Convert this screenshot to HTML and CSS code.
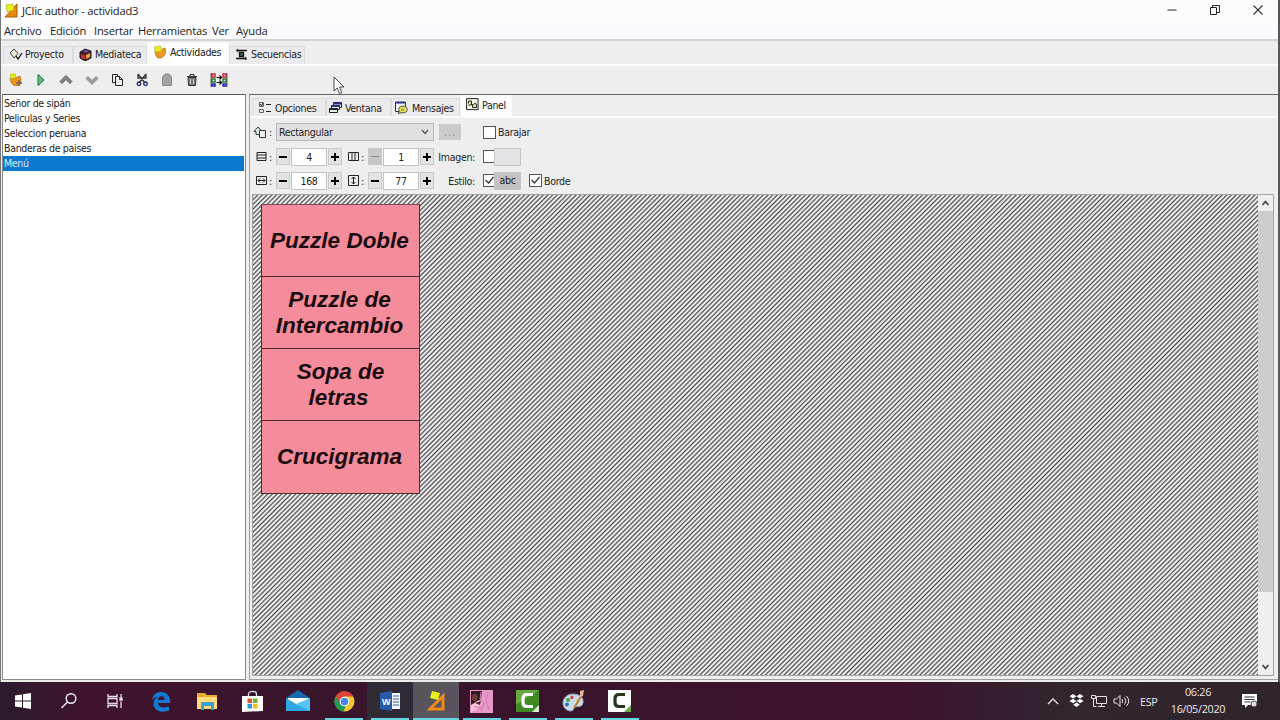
FILE: index.html
```html
<!DOCTYPE html>
<html lang="es">
<head>
  <meta charset="UTF-8" />
  <title>JClic author - actividad3</title>
  <link rel="stylesheet" href="styles.css">
</head>
<body>

  <div class="window">
    <!-- Barra de título -->
    <header class="titlebar">
      <svg class="app-icon" width="14" height="15" viewBox="0 0 14 15"><path d="M13 1v13H1z" fill="#e88a10" stroke="#a65c0c"/><path d="M2 2l7-1 1 6-7 2z" fill="#e3f01c" stroke="#b9a80a" stroke-width=".6"/></svg>
      <span class="title">JClic author - actividad3</span>
      <div class="controls">
        <svg width="12" height="12" viewBox="0 0 12 12"><path d="M1.500 6h9" stroke="#555" stroke-width="1.300"/></svg>
        <svg width="12" height="12" viewBox="0 0 12 12" fill="none" stroke="#222"><path d="M1.500 3.500h6v7h-6zM3.500 3.500v-2h7v7h-3"/></svg>
        <svg width="12" height="12" viewBox="0 0 12 12" stroke="#333" stroke-width="1.100"><path d="M1.500 1.500l9 9M10.500 1.500l-9 9"/></svg>
      </div>
    </header>

    <nav class="menubar">
      <span class="m-archivo">Archivo</span>
      <span class="m-edicion">Edición</span>
      <span class="m-insertar">Insertar</span>
      <span class="m-herramientas">Herramientas</span>
      <span class="m-ver">Ver</span>
      <span>Ayuda</span>
    </nav>

    <!-- Pestañas principales -->
    <div class="tabs main-tabs">
      <div class="tab proyecto">
        <svg width="14" height="12" viewBox="0 0 14 12" fill="#e9e5d2" stroke="#444"><path d="M5 1l4 4.500L5 10 1 5z"/><path d="M7 8l2 3 4-6" fill="none" stroke="#111" stroke-width="1.300"/></svg>
        Proyecto
      </div>
      <div class="tab mediateca">
        <svg width="13" height="13" viewBox="0 0 13 13"><path d="M1 4l5-3 6 2v7l-6 3-5-3z" fill="#4b1824" stroke="#222"/><path d="M2 6l4 1.500v4L2 10z" fill="#d42b3a"/><path d="M7 7l4-2v4l-4 2z" fill="#e5b030"/><path d="M4 3l3-1 3 1-3 2z" fill="#6552b5"/></svg>
        Mediateca
      </div>
      <div class="tab actividades active">
        <svg width="14" height="14" viewBox="0 0 14 14"><path d="M2 5l3 1 7-3 .5 4.500C12 11 8 13.500 5.500 13 3 12 2 9 2 5z" fill="#ef971e" stroke="#b7690d" stroke-width=".8"/><path d="M1.500 2l6-1 1 5-6 1.300z" fill="#e6ec20" stroke="#b5b30a" stroke-width=".6"/></svg>
        Actividades
      </div>
      <div class="tab secuencias">
        <svg width="13" height="13" viewBox="0 0 13 13" stroke="#111" fill="none" stroke-width="1.300"><path d="M3 2.500h9M1 10.500h9"/><path d="M3 1L1 2.500 3 4zM10 9l2 1.500-2 1.500z" fill="#111" stroke-width=".5"/><path d="M4.500 4.500h4v4h-4z" fill="#3f6152"/></svg>
        Secuencias
      </div>
    </div>

    <div class="toolbar">
      <svg width="16" height="16" viewBox="0 0 16 16"><path d="M2 6l3 1 7-3 1 4c-1 4-3 6-6 5.500C4 13 2.500 10 2 6z" fill="#ef971e" stroke="#b7690d" stroke-width=".8"/><path d="M2 2.500l5-1 1 4-5 1.500z" fill="#dfe820" stroke="#b5b30a" stroke-width=".6"/><path d="M11 8v6M8 11h6" stroke="#8d6a49" stroke-width="2.200"/></svg>
      <svg width="16" height="16" viewBox="0 0 16 16"><path d="M5 2.500v11l6-5.500z" fill="#63c07a" stroke="#226b3a"/></svg>
      <svg width="16" height="16" viewBox="0 0 16 16"><path d="M2 9.500l6-6 6 6-2 2-4-4-4 4z" fill="#888" stroke="#444" stroke-width=".8"/></svg>
      <svg width="16" height="16" viewBox="0 0 16 16"><path d="M2 6.500l6 6 6-6-2-2-4 4-4-4z" fill="#999" stroke="#8c8c8c" stroke-width=".8"/></svg>
      <svg width="16" height="16" viewBox="0 0 16 16" fill="#eee" stroke="#222"><path d="M3.500 2.500h5v8h-5z"/><path d="M6.500 4.500h4l3 3v6h-7z"/><path d="M10.500 4.500v3h3" fill="none"/></svg>
      <svg width="16" height="16" viewBox="0 0 16 16" fill="none" stroke="#333" stroke-width="1.300"><path d="M4 2l7 9M12 2L5 11M4 2v4h8V2"/><circle cx="5" cy="11.800" r="1.800" stroke="#262a76"/><circle cx="11.500" cy="11.800" r="1.800" stroke="#262a76"/></svg>
      <svg width="16" height="16" viewBox="0 0 16 16" fill="#a3a3a3" stroke="#8a8a8a"><path d="M3.500 4.500L5 3l1-1h4l1 1 1.500 1.500v9h-9z"/></svg>
      <svg width="16" height="16" viewBox="0 0 16 16" fill="#777" stroke="#333"><path d="M3 4.500h10M6 4V2.500h4V4" fill="none"/><path d="M4 5.500h8l-.5 8h-7z"/><path d="M6.500 7v5M9.500 7v5" stroke="#ccc"/></svg>
      <svg width="18" height="16" viewBox="0 0 18 16" fill="none" stroke-width="1.500"><path d="M2 2h3v3H2zM13 2h3v3h-3z" stroke="#d3203b"/><path d="M2 7h3v3H2zM13 7h3v3h-3z" stroke="#26842c"/><path d="M2 12h3v2H2zM13 12h3v2h-3z" stroke="#2428b4"/><path d="M1 1v14M17 1v14" stroke="#222" stroke-width=".7"/><path d="M6.500 5.500h5M6.500 10.500h5M9.500 3.500l2 2-2 2M9.500 8.500l2 2-2 2" stroke="#111" stroke-width="1.200"/></svg>
    </div>

    <main class="workspace">
      <ul class="activity-list">
        <li>Señor de sipán</li>
        <li>Peliculas y Series</li>
        <li>Seleccion peruana</li>
        <li>Banderas de paises</li>
        <li class="selected">Menú</li>
      </ul>

      <section class="editor">
        <div class="tabs editor-tabs">
          <div class="tab opciones">
            <svg width="14" height="13" viewBox="0 0 14 13" fill="none" stroke="#666"><path d="M1.500 1.500h4v4h-4zM1.500 8.500h4v3h-4z"/><path d="M2 3l1.500 2L5 2M8 3.500h5M8 10.500h5" stroke="#222"/></svg>
            Opciones
          </div>
          <div class="tab ventana">
            <svg width="13" height="13" viewBox="0 0 13 13" fill="#eee" stroke="#222"><path d="M4.500 1.500h8v5h-8z"/><path d="M4 2.500h8" stroke="#283180" stroke-width="2"/><path d="M2.500 4.500h8v4h-8z"/><path d="M2.500 5h8" stroke="#283180" stroke-width="2"/><path d="M.5 7.500h8v4h-8z"/><path d="M.5 8h8" stroke-width="2"/></svg>
            Ventana
          </div>
          <div class="tab mensajes">
            <svg width="13" height="13" viewBox="0 0 13 13"><path d="M.5 1.500h10v9H.5z" fill="#eee" stroke="#333"/><path d="M.5 1.500h10" stroke="#283180" stroke-width="2"/><ellipse cx="8" cy="8.500" rx="4.200" ry="3.300" fill="#eeee53" stroke="#555"/><path d="M4.500 10L3 12.500l4-1" fill="#eeee53" stroke="#555"/><path d="M6 8h4M6 9.500h3" stroke="#777" stroke-width=".7"/></svg>
            Mensajes
          </div>
          <div class="tab panel-tab active">
            <svg width="13" height="13" viewBox="0 0 13 13" fill="#f5f5e8" stroke="#222"><path d="M.6.600h11.500v11H.6z"/><path d="M2.500 5.500V3h3v4h-3M7.500 6.500l2-1.500 1 2v2.500h-4v-3z" fill="#e7e6a1"/></svg>
            Panel
          </div>
        </div>

        <div class="options">
          <div class="row">
            <span class="icon-label"><svg width="14" height="12" viewBox="0 0 14 12" fill="none" stroke="#333"><path d="M5 1L1 5.500h2v3h4M5 1l3.500 4"/><path d="M6.500 4.500h6v7h-6z"/></svg>:</span>
            <div class="combo">Rectangular<svg width="8" height="6" viewBox="0 0 8 6"><path d="M1 1l3 3.500L7 1" fill="none" stroke="#555" stroke-width="1.200"/></svg></div>
            <button class="more">...</button>
            <span class="check"></span><span class="check-text">Barajar</span>
          </div>
          <div class="row">
            <span class="icon-label"><svg width="11" height="11" viewBox="0 0 11 11" fill="none" stroke="#222"><path d="M1 1.500h9v8H1zM1 4h9M1 7h9"/></svg>:</span>
            <div class="stepper"><b class="minus"></b><i>4</i><b class="plus"></b></div>
            <span class="icon-label second"><svg width="11" height="11" viewBox="0 0 11 11" fill="none" stroke="#222"><path d="M.5 1.500h10v8H.500zM4 1.500v8M7 1.500v8"/></svg>:</span>
            <div class="stepper"><b class="minus off"></b><i>1</i><b class="plus"></b></div>
            <span class="field-name">Imagen:</span>
            <span class="check cut"></span><span class="swatch"></span>
          </div>
          <div class="row">
            <span class="icon-label"><svg width="11" height="11" viewBox="0 0 11 11" fill="none" stroke="#222"><path d="M.5 1.500h10v8H.500zM2 5.500h7M4 3.500l-2 2 2 2M7 3.500l2 2-2 2"/></svg>:</span>
            <div class="stepper"><b class="minus"></b><i>168</i><b class="plus"></b></div>
            <span class="icon-label second"><svg width="11" height="11" viewBox="0 0 11 11" fill="none" stroke="#222"><path d="M.5.500h10v10H.500zM5.500 2v7M3.500 4l2-2 2 2M3.500 7l2 2 2-2"/></svg>:</span>
            <div class="stepper"><b class="minus"></b><i>77</i><b class="plus"></b></div>
            <span class="field-name">Estilo:</span>
            <span class="check cut"><svg width="11" height="11" viewBox="0 0 11 11"><path d="M1.500 5l3 3 5-6" fill="none" stroke="#333" stroke-width="1.200"/></svg></span><span class="swatch style">abc</span>
            <span class="check borde"><svg width="11" height="11" viewBox="0 0 11 11"><path d="M1.500 5l3 3 5-6" fill="none" stroke="#333" stroke-width="1.200"/></svg></span><span class="check-text">Borde</span>
          </div>
        </div>

        <!-- Zona de diseño del panel -->
        <div class="canvas">
          <div class="hatch">
            <div class="cells">
              <div class="cell">Puzzle Doble</div>
              <div class="cell">Puzzle de<br>Intercambio</div>
              <div class="cell sopa">Sopa de<br><span>letras</span></div>
              <div class="cell">Crucigrama</div>
            </div>
          </div>
          <div class="scrollbar">
            <svg width="15" height="16" viewBox="0 0 15 16"><path d="M4.500 10l3-3.500 3 3.500" fill="none" stroke="#444" stroke-width="1.700"/></svg>
            <div class="thumb"></div>
            <svg width="15" height="16" viewBox="0 0 15 16"><path d="M4.500 6l3 3.500 3-3.500" fill="none" stroke="#444" stroke-width="1.700"/></svg>
          </div>
        </div>
      </section>
    </main>

    <svg class="cursor" width="13" height="19" viewBox="0 0 13 19"><path d="M1 1v14l3.200-3 2.300 5.500 2.300-1L6.500 11H11z" fill="#fff" stroke="#444"/></svg>
  </div>

  <footer class="taskbar">
    <div class="task"><svg width="16" height="16" viewBox="0 0 16 16" fill="#fff"><path d="M0 2.500l7-1v6H0zM8 1.300L16 0v7.500H8zM0 8.500h7v6l-7-1zM8 8.500h8V16l-8-1.300z"/></svg></div>
    <div class="task"><svg width="18" height="18" viewBox="0 0 18 18" fill="none" stroke="#eee" stroke-width="1.400"><circle cx="11" cy="6.500" r="4.800"/><path d="M7.500 10L1.500 16"/></svg></div>
    <div class="task"><svg width="18" height="18" viewBox="0 0 18 18" fill="none" stroke="#e8dfe4" stroke-width="1.300"><path d="M2 2v2.500h9V2M2 6.500h9v5H2zM2 16v-2.500h9V16M15 2v3M15 9.500V16"/><path d="M14 6h2v2h-2z" fill="#fff"/></svg></div>
    <div class="task edge"><svg width="20" height="21" viewBox="0 0 20 21"><path d="M1 9C2 3 6 1 10 1c6 0 9 4 9 9v2H7c.3 3 3 4.500 6 4.500 2 0 4-.6 5-1.200v4c-2 1-4 1.400-6.500 1.400C6 20.700 2.500 17 2.500 12.500 2.500 9 4.500 7 7.500 5.500 4.500 6 2.500 7 1 9zm6 0h6.500c0-2.500-1-3.700-3-3.700S7.300 7 7 9z" fill="#1479d2"/></svg></div>
    <div class="task"><svg width="22" height="19" viewBox="0 0 22 19"><path d="M1 1h8l2 2h10v14H1z" fill="#e3ad38"/><path d="M1 5h20v12H1z" fill="#ffdc79"/><path d="M5 10h13v8h-3v-4H8v4H5z" fill="#3aa1d8"/></svg></div>
    <div class="task"><svg width="23" height="23" viewBox="0 0 23 23"><path d="M7.500 6V4c0-3.500 8-3.500 8 0v2" fill="none" stroke="#ddd" stroke-width="1.300"/><path d="M1 6h21v15l-21 1z" fill="#fff"/><path d="M6.500 8.500h4.500v4.500H6.500z" fill="#e84d25"/><path d="M12 8.500h4.500v4.500H12z" fill="#72b52c"/><path d="M6.500 14h4.500v4.500H6.500z" fill="#2898dc"/><path d="M12 14h4.500v4.500H12z" fill="#f5b81a"/></svg></div>
    <div class="task"><svg width="24" height="22" viewBox="0 0 24 22"><path d="M0 8l12-8 12 8v13H0z" fill="#1668af"/><path d="M2 8h20v8H2z" fill="#fff"/><path d="M0 8l12 7L24 8v13H0z" fill="#31a6e5"/><path d="M24 8v13L10 14z" fill="#55c5f3"/></svg></div>
    <div class="task open chrome"><svg width="21" height="21" viewBox="0 0 21 21"><circle cx="10.500" cy="10.500" r="10" fill="#f3c72c"/><path d="M1.800 5.500a10 10 0 0 1 17.500 0h-9L6 13z" fill="#dc4437"/><path d="M1.800 5.500L6.500 13l5 2.500-2 5A10 10 0 0 1 1.800 5.500z" fill="#239954"/><circle cx="10.500" cy="10.500" r="4.800" fill="#fff"/><circle cx="10.500" cy="10.500" r="3.800" fill="#4685e8"/></svg></div>
    <div class="task open word"><svg width="21" height="20" viewBox="0 0 21 20"><path d="M11 2h9v16h-9z" fill="#f3f6fc"/><path d="M13 5h6M13 8h6M13 11h6M13 14h6" stroke="#385f9e" stroke-width="1.200"/><path d="M0 2l12-2v20L0 18z" fill="#285ba7"/><text x="2" y="13.500" font-size="9" font-weight="700" fill="#fff">W</text></svg></div>
    <div class="task open current"><svg width="20" height="22" viewBox="0 0 20 22"><path d="M17 6v13H4z" fill="none" stroke="#ef8c1c" stroke-width="3"/><path d="M6 1l8 2-2 7-8-2z" fill="#e8f21b"/></svg></div>
    <div class="task open"><svg width="23" height="23" viewBox="0 0 23 23"><path d="M0 0h23v23H0z" fill="#e996c9"/><path d="M1 1h11l-1 7-3 5-7 3z" fill="#261a20"/><path d="M2 5l4-2 2 4-2 5-4-2z" fill="#6c3a35"/><path d="M1 15l8-5 3 3-3 5-8 4z" fill="#f5c5d8"/><path d="M11 2l-1 7 4 4-3 8M18 2l-2 9 3 9M4 17h7" fill="none" stroke="#d07cae"/><path d="M5 13l6-2-1 4z" fill="#54232e"/></svg></div>
    <div class="task open"><svg width="23" height="22" viewBox="0 0 23 22"><path d="M0 0h23v22H0z" fill="#408a25"/><path d="M0 0h23L0 15z" fill="#69aa3e"/><path d="M17 4.500h-6Q7 4.500 7 8.500v4q0 4 4 4h6" fill="none" stroke="#fff" stroke-width="3.200"/><path d="M16 22h7v-7z" fill="#d9ecd1"/></svg></div>
    <div class="task open"><svg width="23" height="22" viewBox="0 0 23 22"><path d="M11 4C5 4 1 8 1 13s4 8 8 8c3 0 2-3 4-4s7 1 8-4-3-9-10-9z" fill="#c8dceb" stroke="#8aa3b6"/><circle cx="6" cy="10" r="2" fill="#4d9d46"/><circle cx="10" cy="7.500" r="1.700" fill="#d5443b"/><circle cx="5" cy="14.500" r="2" fill="#2d71bc"/><circle cx="16" cy="11" r="1.800" fill="#e9c73a"/><path d="M20 5l-8 13" stroke="#c07d35" stroke-width="2"/><path d="M18 1l4-1-1 6-3 1z" fill="#e8b697"/></svg></div>
    <div class="task open"><svg width="23" height="22" viewBox="0 0 23 22"><path d="M0 0h23v22H0z" fill="#fff"/><path d="M17 4.500h-6Q7 4.500 7 8.500v4q0 4 4 4h6" fill="none" stroke="#26351f" stroke-width="3.200"/><path d="M16 22h7v-7z" fill="#65a948"/></svg></div>

    <div class="tray">
      <svg width="12" height="8" viewBox="0 0 12 8"><path d="M1 7l5-5 5 5" fill="none" stroke="#e8e2e5" stroke-width="1.300"/></svg>
      <svg class="dropbox" width="15" height="14" viewBox="0 0 15 14" fill="#fff"><path d="M4 0l3.500 2.200L4 4.500.5 2.200zM11 0l3.500 2.200L11 4.500 7.500 2.200zM4 4.800L7.500 7 4 9.300.500 7zM11 4.800L14.500 7 11 9.300 7.500 7zM7.500 8.500l3.300 2.200-3.300 2.300-3.300-2.300z"/></svg>
      <svg class="net" width="16" height="14" viewBox="0 0 16 14" fill="none" stroke="#e8e2e5"><path d="M5.500 2.500h10v7h-10zM10.500 9.500v3M7 12.500h7M.5 1.500h4v3h-4zM2.500 4.500v8h3"/></svg>
      <svg class="vol" width="17" height="14" viewBox="0 0 17 14" fill="none" stroke="#e8e2e5"><path d="M1 5h2.500L7 1.500v11L3.500 9H1zM9 5q1.500 2 0 4M11.500 3.500q3 3.500 0 7M13.500 2q4.500 5 0 10"/></svg>
      <span class="lang">ESP</span>
      <div class="clock"><span class="time">06:26</span><span>16/05/2020</span></div>
      <svg width="17" height="16" viewBox="0 0 17 16"><path d="M1 1h15v11H7l-3 3v-3H1z" fill="#fff"/><path d="M3.500 4h10M3.500 6.500h10M3.500 9h6" stroke="#39303a"/><circle cx="13" cy="11" r="3" fill="#ddd" stroke="#39303a" stroke-width=".8"/></svg>
    </div>
  </footer>

</body>
</html>
```
FILE: styles.css
```css
* {
  box-sizing: border-box;
}

body {
  margin: 0;
  width: 1280px;
  height: 720px;
  overflow: hidden;
  display: flex;
  flex-direction: column;
  font-family: "DejaVu Sans Condensed", "DejaVu Sans", sans-serif;
  font-size: 10.5px;
  letter-spacing: -0.3px;
  color: #222;
  background: #30202b;
}

svg {
  flex: none;
  display: block;
}

.window {
  position: relative;
  height: 682px;
  display: flex;
  flex-direction: column;
  background: #eeeeef;
  border-left: 1px solid #77777b;
  border-right: 2px solid #58585c;
}

/* Título y menú */
.titlebar {
  height: 22px;
  display: flex;
  align-items: center;
  padding: 0 14px 2px 3px;
  background: #fdfcfd;
  font-family: "Open Sans", sans-serif;
  font-size: 11.2px;
  letter-spacing: -0.22px;
}

.title {
  margin-left: 4px;
}

.controls {
  margin-left: auto;
  display: flex;
  gap: 31px;
}

.menubar {
  height: 19px;
  display: flex;
  padding-left: 3px;
  background: #fbfbfe;
  border-bottom: 2px solid #d2d2d5;
  font-family: "Open Sans", sans-serif;
  font-size: 11.2px;
  letter-spacing: -0.22px;
  line-height: 17px;
  white-space: nowrap;
}

.m-archivo { width: 46px; }
.m-edicion { width: 44px; }
.m-insertar { width: 44px; }
.m-herramientas { width: 74px; }
.m-ver { width: 24px; }

/* Pestañas */
.tabs {
  display: flex;
  align-items: flex-end;
  border-bottom: 2px solid #fdfdfd;
}

.main-tabs {
  height: 25px;
  padding-left: 2px;
}

.tab {
  height: 18px;
  display: flex;
  align-items: center;
  gap: 3px;
  padding-left: 5px;
  border: 1px solid #dcdcde;
  border-bottom: none;
  background: #ebebed;
  white-space: nowrap;
}

.main-tabs .tab {
  padding-bottom: 3px;
}

.tab.active {
  height: 22px;
  background: #fdfdfd;
  border-color: #f7f7f7;
}

.proyecto { width: 70px; gap: 2px; }
.mediateca { width: 74px; }
.actividades { width: 82px; }
.secuencias { width: 76px; }

.toolbar {
  height: 28px;
  display: flex;
  align-items: center;
  gap: 9.2px;
  padding-left: 7px;
}

.workspace {
  flex: 1;
  display: flex;
  gap: 3px;
  padding: 0 0 2px 1px;
}

.activity-list {
  width: 244px;
  margin: 0;
  padding: 1px 1px 0 0;
  list-style: none;
  background: #fff;
  border: 1px solid #898989;
  border-top-color: #555;
}

.activity-list li {
  height: 15px;
  line-height: 14px;
  padding-left: 1px;
}

.activity-list .selected {
  background: #0b79d0;
  color: #dcecf8;
}

.editor {
  flex: 1;
  display: flex;
  flex-direction: column;
  border: 1px solid #a0a0a0;
  border-top-color: #666;
  border-right: none;
}

.editor-tabs {
  height: 23px;
  padding-left: 2px;
}

.opciones { width: 74px; gap: 3px; }
.ventana { width: 65px; padding-left: 2px; gap: 3px; }
.mensajes { width: 69px; padding-left: 3px; gap: 4px; }
.panel-tab { width: 52px; gap: 3px; }

.editor-tabs .tab.active {
  height: 21px;
  padding-bottom: 3px;
}

/* Opciones del panel */
.options {
  height: 76px;
  padding: 2px 0 0 4px;
}

.row {
  height: 24.4px;
  display: flex;
  align-items: center;
}

.icon-label {
  width: 22px;
  display: flex;
  align-items: center;
  justify-content: flex-end;
  gap: 2px;
  padding-right: 4px;
}

.icon-label.second {
  width: 26px;
  padding-right: 4px;
}

.combo {
  width: 158px;
  height: 18px;
  display: flex;
  align-items: center;
  justify-content: space-between;
  padding: 0 4px 0 2px;
  background: #e0e0e1;
  border: 1px solid #b9b9bb;
}

.more {
  width: 22px;
  height: 16px;
  margin: 0 22px 0 5px;
  padding: 0;
  border: none;
  background: #cacacb;
  color: #8b8b8b;
  font: inherit;
  letter-spacing: 1px;
  line-height: 10px;
}

.stepper {
  width: 66px;
  height: 18px;
  display: flex;
  align-items: center;
  justify-content: space-between;
}

.stepper i {
  width: 36px;
  height: 18px;
  border: 1px solid #c4c4c6;
  background: #fff;
  font-style: normal;
  line-height: 16px;
  text-align: center;
}

.stepper b {
  width: 14px;
  height: 17px;
  border: 1px solid #c9c9cb;
  background:
    linear-gradient(#000, #000) center / 8px 2px no-repeat,
    #e2e2e4;
}

.stepper .plus {
  background:
    linear-gradient(#000, #000) center / 8px 2px no-repeat,
    linear-gradient(#000, #000) center / 2px 8px no-repeat,
    #e2e2e4;
}

.stepper .off {
  background:
    linear-gradient(#858585, #858585) center / 8px 1px no-repeat,
    #c7c7c8;
}

.field-name {
  width: 41px;
  margin-right: 8px;
  text-align: right;
}

.check {
  width: 13px;
  height: 13px;
  border: 1px solid #555;
  background: #fff;
}

.check.cut {
  width: 11px;
  border-right: none;
  overflow: hidden;
}

.check-text {
  margin-left: 2px;
}

.swatch {
  width: 27px;
  height: 18px;
  border: 1px solid #c6c6c8;
  background: #e3e3e5;
  line-height: 14px;
  text-align: center;
}

.swatch.style {
  background: #c2c2c3;
}

.borde {
  margin-left: 8px;
}

/* Lienzo */
.canvas {
  flex: 1;
  display: flex;
  margin: 0 4px 3px 2px;
  border: 1px solid #a2a2a4;
}

.hatch {
  flex: 1;
  padding: 9px 0 0 8px;
  background: repeating-linear-gradient(135deg, #4c4c4c 0, #e8e8e8 1.2px, #f2f2f2 2.1px, #4c4c4c 3.31px);
}

.cells {
  width: 159px;
  border: 1px solid #4a2b30;
  border-top-color: #7c4b52;
}

.cell {
  height: 72px;
  display: flex;
  flex-direction: column;
  justify-content: center;
  background: #f58c9c;
  border-bottom: 1px solid #4a2b30;
  color: #1b0b0e;
  font: italic bold 22.5px/26px "Liberation Sans", Arial, sans-serif;
  letter-spacing: 0;
  text-align: center;
  padding-right: 2px;
}

.cell:last-child {
  border-bottom: none;
}

.cell.sopa {
  padding-right: 0;
}

.sopa span {
  padding-right: 4px;
}

.scrollbar {
  width: 15px;
  display: flex;
  flex-direction: column;
  background: #efeff0;
}

.thumb {
  height: 381px;
  margin-bottom: auto;
  background: #cdcdce;
}

.cursor {
  position: absolute;
  left: 332px;
  top: 76px;
}

/* Barra de tareas */
.taskbar {
  height: 38px;
  display: flex;
  background: linear-gradient(90deg, #2b1b2c 0, #41132d 90px, #38152b 300px, #39142a 640px, #3d132a 900px, #31252e 1060px, #30252c 1280px);
  color: #eee7eb;
}

.task {
  width: 45.9px;
  display: flex;
  align-items: center;
  justify-content: center;
}

.task.open {
  background: linear-gradient(#65d5e2, #65d5e2) center bottom / 38px 2px no-repeat;
}

.task.word {
  background-color: #302a34;
}

.task.current {
  background-color: #57545b;
  background-size: 100% 2px;
}

.task text {
  font-family: "Liberation Sans", sans-serif;
}

.tray {
  margin-left: auto;
  display: flex;
  align-items: center;
  padding-right: 22px;
  font-family: "Open Sans", sans-serif;
  font-size: 10.8px;
}

.dropbox { margin-left: 10px; }
.net { margin-left: 7px; }
.vol { margin-left: 6px; }

.lang {
  width: 18px;
  margin-left: 10px;
}

.clock {
  width: 58px;
  margin: 0 14px 2px 11px;
  display: flex;
  flex-direction: column;
  align-items: center;
  line-height: 17px;
}
```
